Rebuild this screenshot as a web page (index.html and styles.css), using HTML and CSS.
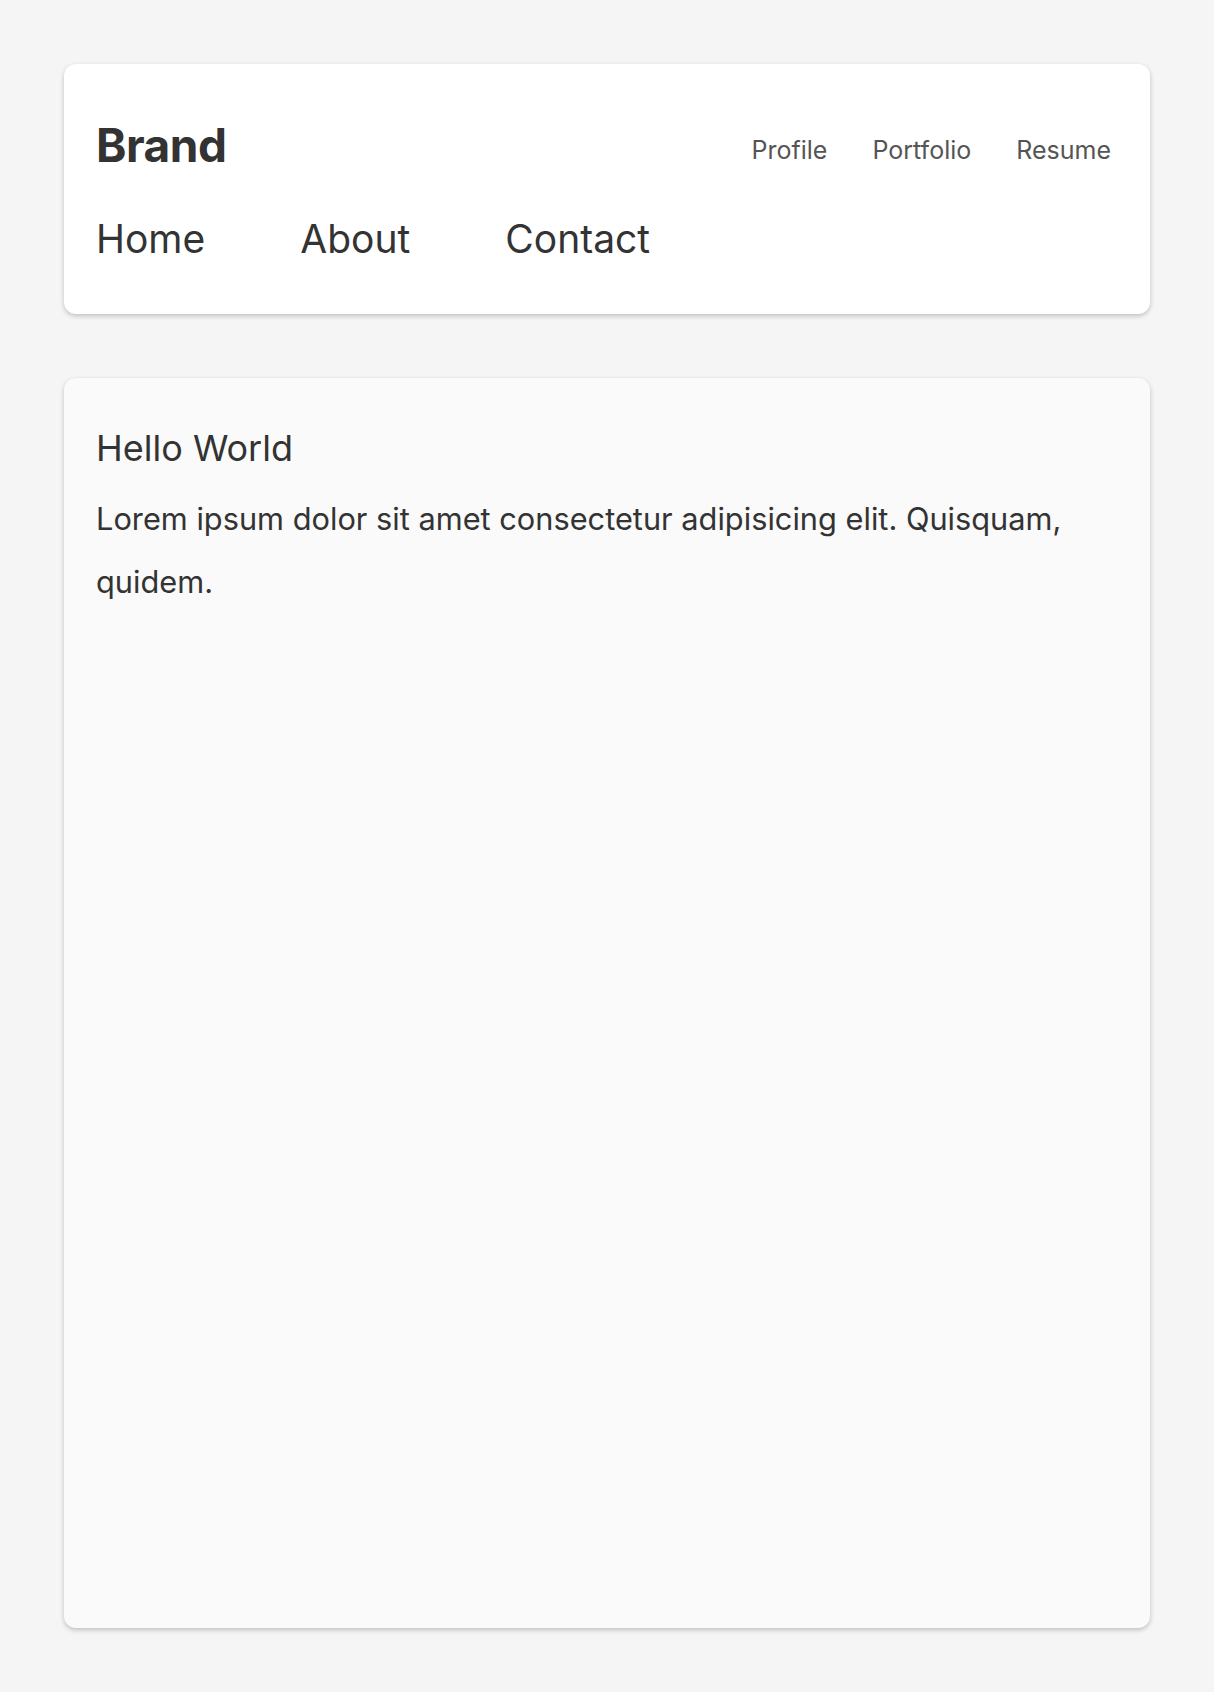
FILE: index.html
```html
<!DOCTYPE html>
<html lang="en">
<head>
<meta charset="utf-8">
<title>Brand</title>
<link rel="stylesheet" href="styles.css">
</head>
<body>
<header class="header-card">
  <div class="top-row">
    <div class="brand">Brand</div>
    <nav class="sub-nav">
      <a href="#">Profile</a>
      <a href="#">Portfolio</a>
      <a href="#">Resume</a>
    </nav>
  </div>
  <nav class="main-nav">
    <a href="#">Home</a>
    <a href="#">About</a>
    <a href="#">Contact</a>
  </nav>
</header>
<main class="content-card">
  <h1 class="title">Hello World</h1>
  <p class="text">Lorem ipsum dolor sit amet consectetur adipisicing elit. Quisquam, quidem.</p>
</main>
</body>
</html>
```
FILE: styles.css
```css
* { box-sizing: border-box; }
html, body { height: 100%; }
body {
  margin: 0;
  padding: 64px;
  background: #f5f5f5;
  font-family: Inter, "Noto Sans", sans-serif;
  color: #333;
  display: flex;
  flex-direction: column;
  gap: 64px;
  min-height: 1692px;
}
a { text-decoration: none; color: inherit; }
.header-card {
  background: #fff;
  border-radius: 12px;
  box-shadow: 0 2px 5px rgba(0,0,0,0.22);
  height: 250px;
  padding: 53px 39px 0 32px;
}
.top-row {
  display: flex;
  justify-content: space-between;
  align-items: flex-start;
}
.brand {
  font-size: 46px;
  font-weight: 700;
  letter-spacing: -0.5px;
  line-height: 56px;
}
.sub-nav {
  display: flex;
  gap: 45px;
  margin-top: 18px;
  font-size: 25px;
  line-height: 30px;
  color: #555;
}
.main-nav {
  display: flex;
  gap: 95px;
  margin-top: 42px;
  font-size: 39px;
  line-height: 48px;
}
.content-card {
  flex: 1;
  background: #fafafa;
  border-radius: 12px;
  box-shadow: 0 2px 5px rgba(0,0,0,0.22);
  padding: 48px 32px 32px;
}
.title {
  margin: 0;
  font-size: 36px;
  font-weight: 400;
  line-height: 44px;
}
.text {
  margin: 17px 0 0;
  font-size: 30.75px;
  line-height: 63px;
}
```
